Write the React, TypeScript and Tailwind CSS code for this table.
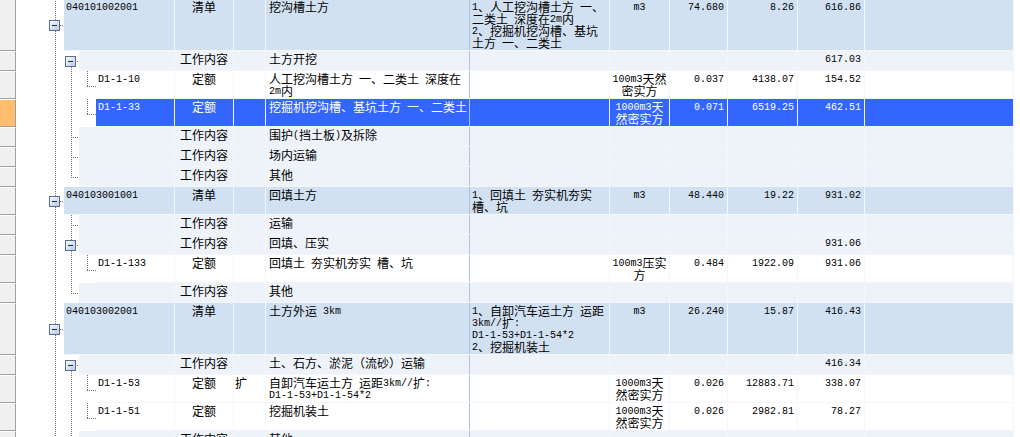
type Lvl = 1 | 2 | 3;

interface Row {
  lvl: Lvl;
  h: 20 | 28 | 52;
  code?: string;
  kind: string;
  ext?: string;
  name: string[];
  feat?: string[];
  unit?: string[];
  qty?: string;
  price?: string;
  total?: string;
  box?: boolean;
  sel?: boolean;
  v2?: "full" | "top" | "fromBox";
}

const rows: Row[] = [
  { lvl: 1, h: 52, code: "040101002001", kind: "清单", name: ["挖沟槽土方"], feat: ["1、人工挖沟槽土方 一、", "二类土 深度在2m内", "2、挖掘机挖沟槽、基坑", "土方 一、二类土"], unit: ["m3"], qty: "74.680", price: "8.26", total: "616.86" },
  { lvl: 2, h: 20, kind: "工作内容", name: ["土方开挖"], total: "617.03", box: true, v2: "fromBox" },
  { lvl: 3, h: 28, code: "D1-1-10", kind: "定额", name: ["人工挖沟槽土方 一、二类土 深度在", "2m内"], unit: ["100m3天然", "密实方"], qty: "0.037", price: "4138.07", total: "154.52" },
  { lvl: 3, h: 28, code: "D1-1-33", kind: "定额", name: ["挖掘机挖沟槽、基坑土方 一、二类土"], unit: ["1000m3天", "然密实方"], qty: "0.071", price: "6519.25", total: "462.51", sel: true },
  { lvl: 2, h: 20, kind: "工作内容", name: ["围护(挡土板)及拆除"], v2: "full" },
  { lvl: 2, h: 20, kind: "工作内容", name: ["场内运输"], v2: "full" },
  { lvl: 2, h: 20, kind: "工作内容", name: ["其他"], v2: "top" },
  { lvl: 1, h: 28, code: "040103001001", kind: "清单", name: ["回填土方"], feat: ["1、回填土 夯实机夯实", "槽、坑"], unit: ["m3"], qty: "48.440", price: "19.22", total: "931.02" },
  { lvl: 2, h: 20, kind: "工作内容", name: ["运输"], v2: "full" },
  { lvl: 2, h: 20, kind: "工作内容", name: ["回填、压实"], total: "931.06", box: true, v2: "full" },
  { lvl: 3, h: 28, code: "D1-1-133", kind: "定额", name: ["回填土 夯实机夯实 槽、坑"], unit: ["100m3压实", "方"], qty: "0.484", price: "1922.09", total: "931.06" },
  { lvl: 2, h: 20, kind: "工作内容", name: ["其他"], v2: "top" },
  { lvl: 1, h: 52, code: "040103002001", kind: "清单", name: ["土方外运 3km"], feat: ["1、自卸汽车运土方 运距", "3km//扩:", "D1-1-53+D1-1-54*2", "2、挖掘机装土"], unit: ["m3"], qty: "26.240", price: "15.87", total: "416.43" },
  { lvl: 2, h: 20, kind: "工作内容", name: ["土、石方、淤泥（流砂）运输"], total: "416.34", box: true, v2: "fromBox" },
  { lvl: 3, h: 28, code: "D1-1-53", kind: "定额", ext: "扩", name: ["自卸汽车运土方 运距3km//扩:", "D1-1-53+D1-1-54*2"], unit: ["1000m3天", "然密实方"], qty: "0.026", price: "12883.71", total: "338.07" },
  { lvl: 3, h: 28, code: "D1-1-51", kind: "定额", name: ["挖掘机装土"], unit: ["1000m3天", "然密实方"], qty: "0.026", price: "2982.81", total: "78.27" },
  { lvl: 2, h: 20, kind: "工作内容", name: ["其他"], v2: "top" },
];

const rowH = { 20: "h-[20px]", 28: "h-[28px]", 52: "h-[52px]" };
const codeW = { 1: "w-[111px]", 2: "w-[96px]", 3: "w-[79px]" };
const indent = { 1: 48, 2: 63, 3: 80 };

// ascii runs are set narrower, like the bitmap font of the original grid
const T = ({ s }: { s: string }) => (
  <>
    {s.split(/([\x20-\x7e]+)/).map((p, i) =>
      /^[\x20-\x7e]+$/.test(p) ? (
        <span key={i} className="relative -top-[2px] font-['Liberation_Mono',monospace] text-[10px]">
          {p}
        </span>
      ) : (
        p
      )
    )}
  </>
);

const Line = ({ s }: { s?: string }) => (
  <div className="h-[12px]">{s && <T s={s} />}</div>
);

const Lines = ({ lines }: { lines?: string[] }) => (
  <>
    {(lines ?? []).map((l, i) => (
      <Line key={i} s={l} />
    ))}
  </>
);

const dot = {
  stroke: "#6f6f6f",
  strokeWidth: 1,
  strokeDasharray: "1 1",
  shapeRendering: "crispEdges" as const,
};

const V = ({ x, y1, y2 }: { x: number; y1: number; y2: number }) => (
  <line x1={x + 0.5} y1={y1} x2={x + 0.5} y2={y2} {...dot} />
);
const H = ({ x1, x2, y }: { x1: number; x2: number; y: number }) => (
  <line x1={x1} y1={y + 0.5} x2={x2 + 1} y2={y + 0.5} {...dot} />
);

const Box = ({ x, y, id }: { x: number; y: number; id: string }) => (
  <g>
    <defs>
      <linearGradient id={id} x1="0" y1="0" x2="1" y2="1">
        <stop offset="0" stopColor="#ffffff" />
        <stop offset="1" stopColor="#b3c7e2" />
      </linearGradient>
    </defs>
    <rect x={x + 0.5} y={y + 0.5} width={10} height={10} fill={`url(#${id})`} stroke="#587096" shapeRendering="crispEdges" />
    <rect x={x + 3} y={y + 5} width={5} height={1} fill="#1a2c4e" />
  </g>
);

const Tree = ({ r, i }: { r: Row; i: number }) => {
  const w = indent[r.lvl];
  const h = r.h;
  const mid = Math.floor(h / 2);
  return (
    <svg width={w} height={h} className="block shrink-0">
      <V x={39} y1={0} y2={h} />
      {r.lvl === 1 && (
        <>
          <H x1={44} x2={47} y={mid} />
          <Box x={33} y={mid - 5} id={`b${i}`} />
        </>
      )}
      {r.lvl === 2 && (
        <>
          {r.v2 === "full" && <V x={55} y1={0} y2={h} />}
          {r.v2 === "top" && <V x={55} y1={0} y2={mid} />}
          {r.v2 === "fromBox" && <V x={55} y1={mid + 6} y2={h} />}
          <H x1={55} x2={62} y={mid} />
          {r.box && <Box x={49} y={mid - 5} id={`b${i}`} />}
        </>
      )}
      {r.lvl === 3 && (
        <>
          <V x={55} y1={0} y2={h} />
          <V x={71} y1={0} y2={15} />
          <H x1={71} x2={79} y={15} />
        </>
      )}
    </svg>
  );
};

const cell = "shrink-0 border-r border-[#f3f6fa] pt-[2px] leading-[12px] overflow-hidden whitespace-pre";

const GridRow = ({ r, i }: { r: Row; i: number }) => {
  const bg = r.sel
    ? "bg-[#3366ff] text-white"
    : r.lvl === 1
    ? "bg-[#d2e1f2]"
    : r.lvl === 2
    ? "bg-[#eef3f9]"
    : "bg-white";
  return (
    <div className={`flex ${rowH[r.h]}`}>
      <div
        className={`w-[16px] shrink-0 border-r border-r-[#a0a0a0] border-t border-t-white border-b border-b-[#a0a0a0] ${
          r.sel ? "bg-[#ffbd6e]" : "bg-[#f0f0f0]"
        }`}
      />
      <Tree r={r} i={i} />
      <div className={`flex border-b border-[#f3f6fa] ${bg}`}>
        <div className={`${cell} ${codeW[r.lvl]} pl-[2px]`}>
          <Line s={r.code} />
        </div>
        <div className={`${cell} w-[59px] text-center`}>
          <Line s={r.kind} />
        </div>
        <div className={`${cell} w-[32px] pl-[1px]`}>
          <Line s={r.ext} />
        </div>
        <div className={`${cell} w-[204px] pl-[3px] border-r-[#a8c4e8]`}>
          <Lines lines={r.name} />
        </div>
        <div className={`${cell} w-[140px] pl-[2px] ${r.h === 52 ? "pt-[1px]" : ""}`}>
          <Lines lines={r.feat} />
        </div>
        <div className={`${cell} w-[60px] text-center`}>
          <Lines lines={r.unit} />
        </div>
        <div className={`${cell} w-[58px] text-right pr-[3px]`}>
          <Line s={r.qty} />
        </div>
        <div className={`${cell} w-[70px] text-right pr-[3px]`}>
          <Line s={r.price} />
        </div>
        <div className={`${cell} w-[67px] text-right pr-[3px]`}>
          <Line s={r.total} />
        </div>
        <div className={`${cell} w-[149px]`} />
      </div>
    </div>
  );
};

export default function App() {
  return (
    <div className="w-[1020px] h-[437px] overflow-hidden bg-white text-[12px] text-black font-['Noto_Sans_CJK_SC',sans-serif]">
      <div className="-mt-px">
        {rows.map((r, i) => (
          <GridRow key={i} r={r} i={i} />
        ))}
      </div>
    </div>
  );
}
